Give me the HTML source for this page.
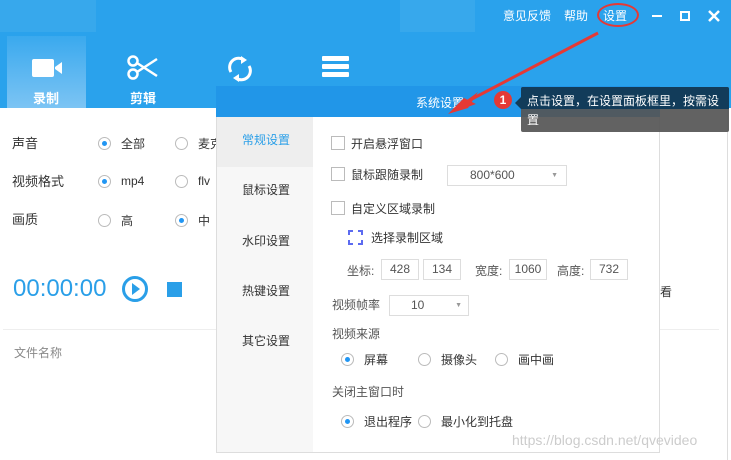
<!DOCTYPE html>
<html><head><meta charset="utf-8"><style>
*{margin:0;padding:0;box-sizing:border-box}
body{width:731px;height:460px;overflow:hidden;background:#fff;position:relative;font-family:"Liberation Sans","Noto Sans CJK SC",sans-serif;font-size:12px;color:#333}
.a{position:absolute;white-space:nowrap}
.rd{position:absolute;width:13px;height:13px;border:1px solid #bbb;border-radius:50%;background:#fff}
.rd.on::after{content:"";position:absolute;left:3px;top:3px;width:5px;height:5px;border-radius:50%;background:#2196f3}
.cb{position:absolute;width:14px;height:14px;border:1px solid #bbb;background:#fff}
.in{position:absolute;height:21px;border:1px solid #ddd;background:#fff;text-align:center;line-height:19px;color:#555}
.w{color:#fff;font-size:13px;font-weight:bold}
</style></head><body>
<div class="a" style="left:0;top:0;width:731px;height:108px;background:#2aa2ec"></div>
<div class="a" style="left:0;top:0;width:96px;height:32px;background:#4cb1ee;opacity:.4"></div>
<div class="a" style="left:400px;top:0;width:75px;height:32px;background:#4cb1ee;opacity:.4"></div>
<div class="a" style="left:7px;top:36px;width:79px;height:72px;background:linear-gradient(#3aa9ee,#7cc4f4)"></div>
<svg class="a" style="left:30px;top:57px" width="34" height="22"><rect x="2" y="2" width="22" height="18" rx="2" fill="#fff"/><path d="M25 10 L32 5 V17 L25 12Z" fill="#fff"/></svg>
<div class="a w" style="left:33px;top:88px">录制</div>
<svg class="a" style="left:126px;top:54px" width="34" height="28" fill="none" stroke="#fff" stroke-width="2.5"><circle cx="7" cy="7" r="4.5"/><circle cx="7" cy="20" r="4.5"/><path d="M11 9 L31 22 M11 18 L31 5"/></svg>
<div class="a w" style="left:130px;top:88px">剪辑</div>
<svg class="a" style="left:226px;top:54px" width="28" height="30" fill="none" stroke="#fff" stroke-width="3"><path d="M5 18 A9 9 0 0 1 18 6"/><path d="M23 12 A9 9 0 0 1 10 24"/><path d="M15 2 L21 6 L15 10Z M13 28 L7 24 L13 20Z" fill="#fff" stroke="none"/></svg>
<svg class="a" style="left:321px;top:55px" width="30" height="24"><rect x="1" y="1" width="27" height="5" rx="1" fill="#fff"/><rect x="1" y="9" width="27" height="5" rx="1" fill="#fff"/><rect x="1" y="17" width="27" height="5" rx="1" fill="#fff"/></svg>
<div class="a" style="left:503px;top:7px;color:#fff;font-size:12px">意见反馈</div>
<div class="a" style="left:564px;top:7px;color:#fff;font-size:12px">帮助</div>
<div class="a" style="left:603px;top:7px;color:#fff;font-size:12px">设置</div>
<div class="a" style="left:597px;top:3px;width:42px;height:24px;border:2px solid #e53935;border-radius:50%"></div>
<div class="a" style="left:652px;top:15px;width:10px;height:2px;background:#fff"></div>
<div class="a" style="left:680px;top:11px;width:10px;height:10px;border:2px solid #fff"></div>
<svg class="a" style="left:708px;top:10px" width="12" height="12" stroke="#fff" stroke-width="2.5"><path d="M1 1L11 11M11 1L1 11"/></svg>
<!-- main content -->
<div class="a" style="left:12px;top:133px;font-size:13px">声音</div>
<div class="a" style="left:12px;top:171px;font-size:13px">视频格式</div>
<div class="a" style="left:12px;top:209px;font-size:13px">画质</div>
<div class="rd on" style="left:98px;top:137px"></div><div class="a" style="left:121px;top:135px">全部</div>
<div class="rd" style="left:175px;top:137px"></div><div class="a" style="left:198px;top:135px">麦克</div>
<div class="rd on" style="left:98px;top:175px"></div><div class="a" style="left:121px;top:174px">mp4</div>
<div class="rd" style="left:175px;top:175px"></div><div class="a" style="left:198px;top:174px">flv</div>
<div class="rd" style="left:98px;top:214px"></div><div class="a" style="left:121px;top:212px">高</div>
<div class="rd on" style="left:175px;top:214px"></div><div class="a" style="left:198px;top:212px">中</div>
<div class="a" style="left:13px;top:275px;font-size:24px;color:#2a9fe8">00:00:00</div>
<div class="a" style="left:122px;top:276px;width:26px;height:26px;border:3px solid #2a9fe8;border-radius:50%"></div>
<svg class="a" style="left:131px;top:283px" width="10" height="12"><path d="M1 0 L9 6 L1 12Z" fill="#2a9fe8"/></svg>
<div class="a" style="left:167px;top:282px;width:15px;height:15px;background:#2a9fe8"></div>
<div class="a" style="left:3px;top:329px;width:716px;height:1px;background:#eee"></div>
<div class="a" style="left:14px;top:344px;color:#888">文件名称</div>
<div class="a" style="left:660px;top:283px">看</div>
<div class="a" style="left:727px;top:108px;width:1px;height:352px;background:#ddd"></div>
<!-- dialog -->
<div class="a" style="left:216px;top:86px;width:444px;height:367px;background:#fff;border:1px solid #ddd"></div>
<div class="a" style="left:216px;top:86px;width:444px;height:31px;background:#2196e8"></div>
<div class="a" style="left:416px;top:94px;color:#fff">系统设置</div>
<div class="a" style="left:217px;top:117px;width:96px;height:335px;background:#f7f7f7"></div>
<div class="a" style="left:217px;top:117px;width:96px;height:50px;background:#eee"></div>
<div class="a" style="left:242px;top:131px;color:#2a9fe8">常规设置</div>
<div class="a" style="left:242px;top:181px">鼠标设置</div>
<div class="a" style="left:242px;top:232px">水印设置</div>
<div class="a" style="left:242px;top:282px">热键设置</div>
<div class="a" style="left:242px;top:332px">其它设置</div>
<div class="cb" style="left:331px;top:136px"></div><div class="a" style="left:351px;top:135px">开启悬浮窗口</div>
<div class="cb" style="left:331px;top:167px"></div><div class="a" style="left:351px;top:166px">鼠标跟随录制</div>
<div class="in" style="left:447px;top:165px;width:120px;text-align:left;padding-left:22px">800*600<span style="position:absolute;right:8px;font-size:7px;color:#999">▼</span></div>
<div class="cb" style="left:331px;top:201px"></div><div class="a" style="left:351px;top:200px">自定义区域录制</div>
<svg class="a" style="left:348px;top:230px" width="15" height="15" fill="none" stroke="#5c6bf0" stroke-width="2"><path d="M1 5V1H5M10 1H14V5M14 10V14H10M5 14H1V10"/></svg>
<div class="a" style="left:371px;top:229px">选择录制区域</div>
<div class="a" style="left:347px;top:262px;color:#555">坐标:</div>
<div class="in" style="left:381px;top:259px;width:38px">428</div>
<div class="in" style="left:423px;top:259px;width:38px">134</div>
<div class="a" style="left:475px;top:262px;color:#555">宽度:</div>
<div class="in" style="left:509px;top:259px;width:38px">1060</div>
<div class="a" style="left:557px;top:262px;color:#555">高度:</div>
<div class="in" style="left:590px;top:259px;width:38px">732</div>
<div class="a" style="left:332px;top:296px;color:#555">视频帧率</div>
<div class="in" style="left:389px;top:295px;width:80px;text-align:left;padding-left:21px">10<span style="position:absolute;right:6px;font-size:7px;color:#999">▼</span></div>
<div class="a" style="left:332px;top:325px;color:#555">视频来源</div>
<div class="rd on" style="left:341px;top:353px"></div><div class="a" style="left:364px;top:351px">屏幕</div>
<div class="rd" style="left:418px;top:353px"></div><div class="a" style="left:441px;top:351px">摄像头</div>
<div class="rd" style="left:495px;top:353px"></div><div class="a" style="left:518px;top:351px">画中画</div>
<div class="a" style="left:332px;top:383px;color:#555">关闭主窗口时</div>
<div class="rd on" style="left:341px;top:415px"></div><div class="a" style="left:364px;top:413px">退出程序</div>
<div class="rd" style="left:418px;top:415px"></div><div class="a" style="left:441px;top:413px">最小化到托盘</div>
<div class="a" style="left:512px;top:432px;color:#ccc;font-size:14px">https://blog.csdn.net/qvevideo</div>
<!-- tooltip -->
<div class="a" style="left:521px;top:87px;width:208px;height:45px;background:#555;opacity:.92;border-radius:2px"></div>
<div class="a" style="left:521px;top:87px;width:208px;height:22px;background:#123c5a;border-radius:2px 2px 0 0"></div>
<div class="a" style="left:515px;top:97px;width:0;height:0;border:6px solid transparent;border-right-color:#123c5a;border-left:0"></div>
<div class="a" style="left:527px;top:92px;color:#fff;font-size:12px;line-height:19px;white-space:normal;width:194px">点击设置，在设置面板框里，按需设置</div>
<div class="a" style="left:494px;top:91px;width:18px;height:18px;border-radius:50%;background:#e53935;color:#fff;font-weight:bold;text-align:center;line-height:18px;font-size:12px">1</div>
<!-- arrow -->
<svg class="a" style="left:0;top:0" width="731" height="460"><path d="M598 33 L470 100" stroke="#e53935" stroke-width="3"/><path d="M448 114 L478 92 L468 108Z M448 114 L464 98 L476 104Z" fill="#e53935"/></svg>
</body></html>
